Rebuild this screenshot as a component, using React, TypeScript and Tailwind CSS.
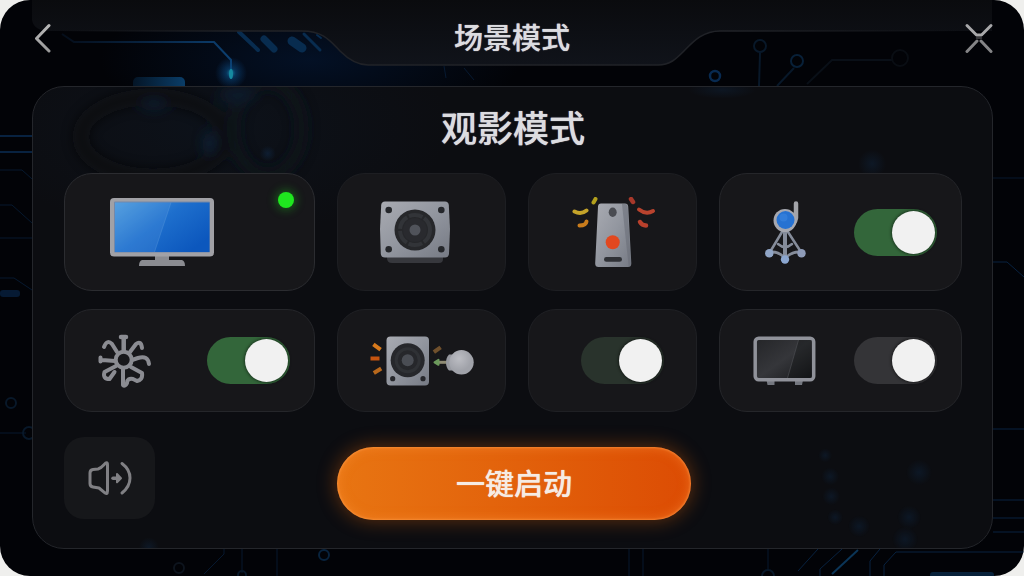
import { useState, type ReactNode } from 'react'
import clsx from 'clsx'

type Tone = 'green' | 'dim' | 'gray'

const TONES: Record<Tone, string> = {
  green: 'bg-[#33663a]',
  dim: 'bg-[#29332c]',
  gray: 'bg-[#343437]',
}

function Toggle({ label, tone }: { label: string; tone: Tone }) {
  const [on, setOn] = useState(true)

  return (
    <input
      type="checkbox"
      role="switch"
      aria-label={label}
      checked={on}
      onChange={(e) => setOn(e.target.checked)}
      className={clsx(
        'h-[47px] w-[83px] shrink-0 cursor-pointer appearance-none rounded-full p-0.5',
        'before:block before:size-[43px] before:rounded-full before:bg-[#f1f1f1] before:shadow-[0_0_3px_1px_rgba(0,0,0,0.45)] before:transition-transform',
        'checked:before:translate-x-[36px]',
        TONES[tone],
      )}
    />
  )
}

const CARD = 'relative flex items-center rounded-[28px] border bg-[#17171a]'
const TITLE = 'text-center leading-10 font-medium text-[#dcdce0] text-shadow-[0_0_1px_#dcdce0]'

function DeviceButton({ label, className, children }: { label: string; className?: string; children: ReactNode }) {
  return (
    <button type="button" aria-label={label} className={clsx(CARD, 'cursor-pointer', className)}>
      {children}
    </button>
  )
}

function Backdrop() {
  return (
    <svg
      className="absolute inset-0 size-full"
      viewBox="0 0 1024 576"
      preserveAspectRatio="xMidYMid slice"
      fill="none"
      aria-hidden="true"
    >
      <defs>
        <radialGradient id="haze">
          <stop offset="0" stopColor="#04152f" stopOpacity="0.75" />
          <stop offset="1" stopColor="#04152f" stopOpacity="0" />
        </radialGradient>
        <radialGradient id="spark">
          <stop offset="0" stopColor="#1683a6" />
          <stop offset="0.3" stopColor="#0a4a80" stopOpacity="0.6" />
          <stop offset="1" stopColor="#0a3a70" stopOpacity="0" />
        </radialGradient>
        <linearGradient id="trace" x1="60" x2="230" y1="0" y2="0" gradientUnits="userSpaceOnUse">
          <stop stopColor="#050d19" />
          <stop offset="0.5" stopColor="#082340" />
          <stop offset="1" stopColor="#0c3f70" />
        </linearGradient>
        <linearGradient id="pill">
          <stop stopColor="#041526" />
          <stop offset="1" stopColor="#0a3d68" />
        </linearGradient>
      </defs>

      <ellipse cx="310" cy="60" rx="210" ry="70" fill="url(#haze)" />
      <path d="M62 34l12 8h140l17 18v14" stroke="url(#trace)" strokeWidth="2" />
      <circle cx="231" cy="73" r="16" fill="url(#spark)" />
      <ellipse cx="231" cy="74" rx="2" ry="5" fill="#168aa0" />
      <rect x="133" y="77" width="52" height="14" rx="5" fill="url(#pill)" />
      <g stroke="#082c4f" strokeLinecap="round">
        <path d="M239 32l19 18" strokeWidth="4" />
        <path d="M264 39l10 10" strokeWidth="7" />
        <path d="M292 41l10 7" strokeWidth="9" />
        <path d="M304 34l16 16" strokeWidth="3" />
        <path d="M317 35l4 3" strokeWidth="2" />
      </g>
      <g stroke="#082240" strokeWidth="1">
        <path d="M444 66l2 12M464 68l10 12" opacity="0.7" />
        <path d="M0 136h32M0 152h32" strokeWidth="2" />
        <path d="M0 170h22l10 9M0 238h32M0 278h14l18 12M0 433h26M0 205h12l20 18" opacity="0.7" />
        <path d="M993 262h14l17 15M993 429h31M993 500h31M993 518h31M993 532h31M896 552h128" />
        <path d="M993 178h31M224 549v5l-20 20M242 549v24M277 549v27M629 549v27M643 549v27M768 549v20" opacity="0.7" />
        <path d="M818 549l-20 22M842 549l-22 20v7M880 549l-10 12v15M896 552l-12 13v11" />
      </g>
      <path d="M858 550l-26 24" stroke="#0b3557" strokeWidth="2" />
      <rect x="0" y="290" width="20" height="7" rx="3" fill="#061a33" />
      <rect x="930" y="572" width="64" height="7" rx="3" fill="#07213a" />
      <circle cx="715" cy="76" r="5" stroke="#082a50" strokeWidth="2.5" />
      <g stroke="#081829" strokeWidth="2">
        <circle cx="760" cy="46" r="6" />
        <path d="M760 53l-1 33" />
        <circle cx="797" cy="61" r="6" stroke="#082038" />
        <path d="M794 68l-17 18" />
        <circle cx="29" cy="433" r="6" />
        <circle cx="11" cy="403" r="5" />
        <circle cx="179" cy="568" r="5" stroke="#0d141d" />
        <circle cx="324" cy="555" r="5" stroke="#08233d" />
        <circle cx="242" cy="575" r="4" />
        <circle cx="768" cy="576" r="6" />
      </g>
      <path d="M807 84l25-24h60" stroke="#090f17" strokeWidth="2" />
      <circle cx="900" cy="58" r="8" stroke="#090d13" strokeWidth="2" />
    </svg>
  )
}

// soft light seen through the glass panel
function PanelGlow() {
  return (
    <svg className="absolute inset-0 size-full rounded-[32px]" viewBox="0 0 960 462" preserveAspectRatio="xMidYMid slice" fill="none" aria-hidden="true">
      <defs>
        <radialGradient id="mist">
          <stop offset="0" stopColor="#102c4c" stopOpacity="0.5" />
          <stop offset="1" stopColor="#102c4c" stopOpacity="0" />
        </radialGradient>
        <filter id="soft" x="-20%" y="-20%" width="140%" height="140%">
          <feGaussianBlur stdDeviation="6" />
        </filter>
      </defs>
      <ellipse cx="180" cy="40" rx="240" ry="110" fill="url(#mist)" opacity="0.3" />
      <g filter="url(#soft)" opacity="0.6">
        <ellipse cx="120" cy="50" rx="72" ry="40" stroke="#0d0d0f" strokeWidth="16" />
        <ellipse cx="235" cy="42" rx="34" ry="46" stroke="#10151f" strokeWidth="14" />
        <ellipse cx="176" cy="56" rx="6" ry="11" fill="#0f2c46" />
        <ellipse cx="121" cy="18" rx="13" ry="6" fill="#0e2138" />
        <ellipse cx="204" cy="8" rx="18" ry="9" fill="#0e2337" />
      </g>
      <circle cx="235" cy="67" r="8" fill="url(#mist)" />
      <ellipse cx="690" cy="3" rx="34" ry="9" fill="url(#mist)" opacity="0.6" />
      <g fill="url(#mist)" opacity="0.7">
        <circle cx="840" cy="77" r="14" />
        <circle cx="793" cy="369" r="7" />
        <circle cx="798" cy="390" r="9" />
        <circle cx="799" cy="410" r="9" />
        <circle cx="803" cy="431" r="8" />
        <circle cx="827" cy="440" r="11" />
        <circle cx="887" cy="386" r="13" />
        <circle cx="877" cy="431" r="12" />
        <circle cx="873" cy="453" r="13" />
        <circle cx="116" cy="461" r="10" />
      </g>
    </svg>
  )
}

function IconDefs() {
  return (
    <svg className="absolute size-0" aria-hidden="true">
      <defs>
        <linearGradient id="metal" x1="0" y1="0" x2="1" y2="1">
          <stop stopColor="#a9abb2" />
          <stop offset="0.5" stopColor="#92969f" />
          <stop offset="1" stopColor="#767a84" />
        </linearGradient>
        <linearGradient id="screen" x1="0" y1="0" x2="1" y2="0.7">
          <stop stopColor="#4d9bdd" />
          <stop offset="0.5" stopColor="#1e6fcd" />
          <stop offset="1" stopColor="#0c57bd" />
        </linearGradient>
        <linearGradient id="glass" x1="0" y1="0" x2="1" y2="1">
          <stop stopColor="#242528" />
          <stop offset="0.5" stopColor="#35363a" />
          <stop offset="1" stopColor="#151619" />
        </linearGradient>
        <linearGradient id="chrome" x1="0" y1="0" x2="0" y2="1">
          <stop stopColor="#b8b8b8" />
          <stop offset="1" stopColor="#9a9a9a" />
        </linearGradient>
        <radialGradient id="bulb" cx="0.4" cy="0.35">
          <stop stopColor="#bcbdc3" />
          <stop offset="1" stopColor="#a0a2a9" />
        </radialGradient>
      </defs>
    </svg>
  )
}

function TvIcon() {
  return (
    <svg width="104" height="68" viewBox="0 0 104 68" aria-hidden="true">
      <path d="M45 57h14v5h13q3 1 3 6H29q0-5 3-6h13z" fill="#8b8c91" />
      <rect width="104" height="58.5" rx="4" fill="#a1a1a6" />
      <rect x="4" y="3.5" width="96" height="51" rx="1" fill="#7488a8" />
      <rect x="5" y="4.5" width="94.5" height="49.5" fill="url(#screen)" />
      <path d="M5 4.5H61L44.5 54H5z" fill="#8cc2ee" opacity="0.14" />
      <path d="M61 4.5L44.5 54" stroke="#7db4e6" strokeWidth="0.6" opacity="0.4" />
    </svg>
  )
}

function SpeakerIcon() {
  return (
    <svg width="70" height="62" viewBox="0 0 70 62" aria-hidden="true">
      <path d="M7 55h56v3q0 4-4 4H12q-5 0-5-5z" fill="#37383d" />
      <path d="M5 .5H65q3.5 0 3.8 3.5L70 28 69 52.5q-.3 4-4 4H5q-4 0-4.200-4L0 28 1.200 4Q1.500.5 5 .5z" fill="url(#metal)" />
      <circle cx="35" cy="29" r="20.5" fill="#26272a" />
      <circle cx="35" cy="29" r="15" fill="none" stroke="#323438" strokeWidth="4" strokeDasharray="14 2" />
      <circle cx="35" cy="29" r="12" fill="#292a2e" />
      <circle cx="35" cy="29" r="5.5" fill="#50535a" />
      <g fill="#25272b">
        <circle cx="8.700" cy="9" r="3.3" />
        <circle cx="61.300" cy="9" r="3.3" />
        <circle cx="8.700" cy="48.300" r="3.3" />
        <circle cx="61.300" cy="48.300" r="3.3" />
      </g>
    </svg>
  )
}

function RemoteIcon() {
  return (
    <svg width="84" height="70" viewBox="0 0 84 70" fill="none" strokeLinecap="round" aria-hidden="true">
      <path d="M29 6.500H53q3 0 3.200 3L59.300 66q.2 4-3.300 4H26.500q-3.500 0-3.300-4L26 9.500q.2-3 3-3z" fill="url(#metal)" />
      <path d="M50 7h3q2.500 0 2.700 3l3 56q0 3-2 3.500z" fill="#656973" opacity="0.5" />
      <ellipse cx="40.700" cy="15.300" rx="4" ry="4.700" fill="#4a4c52" />
      <circle cx="40.700" cy="45.300" r="7" fill="#e2481f" />
      <rect x="32" y="60" width="18" height="4.800" rx="2.400" fill="#2f3136" />
      <path d="M21.500 5.500l2-3.500" stroke="#b3a01c" strokeWidth="4" />
      <path d="M2.500 14.500Q9 18 14.500 13.500" stroke="#c4a32a" strokeWidth="4" />
      <path d="M7.500 28.500q6.500 0 7-4" stroke="#c97c1c" strokeWidth="4" />
      <path d="M59 2l2 3" stroke="#a8382a" strokeWidth="4.500" />
      <path d="M67 12.500Q74 18 81 14" stroke="#b9432e" strokeWidth="4" />
      <path d="M68 25q2 3.500 6 3.500" stroke="#b9402c" strokeWidth="4.500" />
    </svg>
  )
}

function TripodIcon() {
  return (
    <svg width="41" height="63" viewBox="0 0 41 63" fill="none" strokeLinecap="round" aria-hidden="true">
      <path d="M31 2.500V17Q30 23 24 27" stroke="#a3a4a9" strokeWidth="4.500" />
      <g stroke="#858c9a" strokeWidth="2.500">
        <path d="M17 31L5 51M23 31l13 20" />
        <path d="M5 51q8-1 15 6 8-7 16-6" />
        <path d="M13 43q7 6 14 0" />
        <path d="M20 29v28" strokeWidth="4" />
      </g>
      <circle cx="20" cy="19.500" r="11.500" fill="#a6a8b0" />
      <circle cx="20.500" cy="19" r="9" fill="#2672d2" />
      <circle cx="18.500" cy="16.500" r="4" fill="#3b86df" opacity="0.6" />
      <circle cx="4.300" cy="52.300" r="4.200" fill="#90a5c6" />
      <circle cx="36.500" cy="52.300" r="4.200" fill="#8e9bb8" />
      <circle cx="20" cy="58.500" r="4.200" fill="#8ba6d0" />
    </svg>
  )
}

function FanIcon() {
  return (
    <svg width="54" height="54" viewBox="0 0 54 54" fill="none" stroke="#8b8c92" strokeWidth="4" strokeLinecap="round" strokeLinejoin="round" aria-hidden="true">
      <circle cx="25.700" cy="25.700" r="8" />
      <path d="M25.700 17V3M23 3h5" strokeWidth="4.500" />
      <path d="M19 18l-5-8Q9 5 6 13" />
      <path d="M32 18l6-8q5-4 6 4" />
      <path d="M17 27l-13-1M2.500 23.500v4" />
      <path d="M34 26l6-2q10-3 11 6" />
      <path d="M18 32L6.500 38q-2 7 5 7l5-7" />
      <path d="M33 33l11 6q1 7-5 8l-4-2q-6-1-6 4-2 4-4 2V34" />
    </svg>
  )
}

function SpeakerLampIcon() {
  return (
    <svg width="104" height="50" viewBox="0 0 104 50" fill="none" aria-hidden="true">
      <rect x="16.500" y=".5" width="42.500" height="49" rx="4" fill="url(#metal)" />
      <circle cx="37.700" cy="24.300" r="17" fill="#26272b" />
      <circle cx="37.700" cy="24.300" r="11.500" stroke="#2f3135" strokeWidth="3" />
      <circle cx="37.700" cy="24.300" r="6" fill="#4a4d54" />
      <circle cx="22.700" cy="42.700" r="2.600" fill="#26272b" />
      <circle cx="53" cy="42.700" r="2.600" fill="#26272b" />
      <path d="M5 9.500l4 3" stroke="#d87a1c" strokeWidth="4" strokeLinecap="square" />
      <path d="M2.500 22.500h5" stroke="#c6540f" strokeWidth="4" strokeLinecap="square" />
      <path d="M5.500 36l4-2.500" stroke="#b8681c" strokeWidth="4" strokeLinecap="square" />
      <path d="M65.500 15l3.500-2.500" stroke="#70502c" strokeWidth="4" strokeLinecap="square" />
      <path d="M68 26.300h9" stroke="#8f8b74" strokeWidth="3" />
      <path d="M64.500 26.300l4-2.500v5z" fill="#6c9a5c" stroke="#6c9a5c" strokeWidth="2" strokeLinejoin="round" />
      <path d="M79 18.500h7v16h-7q-3-3-3-8t3-8z" fill="#96989f" />
      <circle cx="91.500" cy="26.300" r="12.200" fill="url(#bulb)" />
    </svg>
  )
}

function ScreenIcon() {
  return (
    <svg width="63" height="49" viewBox="0 0 63 49" fill="none" aria-hidden="true">
      <path d="M13.500 44h8v5h-7zM42 44h8l-1 5h-7z" fill="#74777f" />
      <rect x="2.200" y="2.200" width="58.500" height="41.500" rx="3.500" fill="url(#glass)" stroke="#90929a" strokeWidth="3.500" />
      <path d="M45.500 4H58.500V42H34.500z" fill="#0c0d0f" opacity="0.35" />
      <path d="M45.500 4L34.500 42" stroke="#4b4c50" strokeWidth="0.700" />
    </svg>
  )
}

function SoundIcon() {
  return (
    <svg width="44" height="35" viewBox="0 0 44 35" fill="none" stroke="#808084" strokeWidth="3" strokeLinecap="round" strokeLinejoin="round" aria-hidden="true">
      <path d="M5 8.500l5-.5q3-.8 6-4.200 3.500-4 3.500.2v26q0 4.500-3.500 1.200L11 27l-6-1q-3-.5-3-3.500V12q0-3 3-3.500z" />
      <path d="M34 2.500q8 6 8 14.500t-8 15" />
      <path d="M25 17.200h5" strokeWidth="3.500" />
      <path d="M29 13l4 4.200-4 4z" fill="#808084" strokeWidth="2" />
    </svg>
  )
}

function TopBar() {
  return (
    <header className="relative flex h-[66px] items-center justify-between px-[30px] pt-2.5">
      <svg className="absolute inset-0 size-full" viewBox="0 0 1024 66" preserveAspectRatio="none" aria-hidden="true">
        <defs>
          <linearGradient id="bar" x1="0" x2="0" y1="0" y2="1">
            <stop stopColor="#0a0b0e" />
            <stop offset="1" stopColor="#10131a" />
          </linearGradient>
          <linearGradient id="rim" x1="60" x2="960" y1="0" y2="0" gradientUnits="userSpaceOnUse">
            <stop stopColor="#202227" stopOpacity="0" />
            <stop offset="0.2" stopColor="#202227" />
            <stop offset="0.75" stopColor="#202227" />
            <stop offset="1" stopColor="#202227" stopOpacity="0" />
          </linearGradient>
        </defs>
        <path d="M32 0V20Q34 31 50 31H302C324 31 331 42 340 51S358 65 368 65H658C670 65 676 59 684 51S702 31 720 31H992V0z" fill="url(#bar)" />
        <path d="M60 31H302C324 31 331 42 340 51S358 65 368 65H658C670 65 676 59 684 51S702 31 720 31H960" fill="none" stroke="url(#rim)" strokeWidth="1.500" />
      </svg>
      <button type="button" aria-label="返回" className="relative cursor-pointer p-1">
        <svg width="17" height="30" viewBox="0 0 17 30" fill="none" stroke="url(#chrome)" strokeWidth="3" strokeLinecap="round" strokeLinejoin="round">
          <path d="M15 2.500L2.500 15.500l12.500 12.500" />
        </svg>
      </button>
      <h1 className={clsx(TITLE, 'pointer-events-none absolute inset-x-0 pb-1 text-[29px]')}>场景模式</h1>
      <button type="button" aria-label="关闭" className="relative cursor-pointer">
        <svg width="30" height="30" viewBox="0 0 30 30" fill="none" strokeWidth="3" strokeLinecap="round" strokeLinejoin="round">
          <path d="M3 2.500L12.500 12h5L27 2.500" stroke="#a8a8aa" />
          <path d="M3 28.500L13 18M27 28.500L17 18" stroke="#848486" />
          <path d="M12.500 15h5" stroke="#4a4a4c" strokeWidth="1.500" />
        </svg>
      </button>
    </header>
  )
}

export default function App() {
  return (
    <div className="min-h-screen bg-[#efefed]">
      <div className="relative flex min-h-screen flex-col overflow-hidden rounded-[30px] bg-[#020307] font-['Noto_Sans_CJK_SC',sans-serif] text-white">
        <IconDefs />
        <Backdrop />
        <TopBar />

        <main className="relative mt-5 mr-[31px] mb-[27px] ml-8 flex-1 rounded-[32px] border border-[#24262b] bg-[#0c0d11] pt-[19px] pr-[30px] pb-7 pl-[31px]">
          <PanelGlow />
          <h2 className={clsx(TITLE, 'relative mb-[27px] text-[36px]')}>观影模式</h2>

          <div className="relative grid grid-cols-[251fr_170fr_169fr_243fr] grid-rows-[118px_103px] gap-x-[22px] gap-y-[18px]">
            <DeviceButton label="电视" className="border-[#2b2c30] pl-[45px]">
              <TvIcon />
              <span className="absolute top-[18px] right-5 size-4 rounded-full bg-[#1fe61f] shadow-[0_0_10px_2px_rgba(31,230,31,0.35)]" />
            </DeviceButton>
            <DeviceButton label="音箱" className="border-[#1d1e22] pl-[42px]">
              <SpeakerIcon />
            </DeviceButton>
            <DeviceButton label="遥控器" className="justify-center border-[#1d1e22] pl-0.5">
              <RemoteIcon />
            </DeviceButton>
            <div className={clsx(CARD, 'justify-between border-[#25262a] pr-6 pl-[45px]')}>
              <TripodIcon />
              <Toggle label="摄像头" tone="green" />
            </div>

            <div className={clsx(CARD, 'justify-between border-[#25262a] pr-6 pl-[33px]')}>
              <FanIcon />
              <Toggle label="风扇" tone="green" />
            </div>
            <DeviceButton label="音箱与灯" className="justify-center border-[#1f2024]">
              <SpeakerLampIcon />
            </DeviceButton>
            <div className={clsx(CARD, 'justify-end border-[#1f2024] pr-8')}>
              <Toggle label="灯光" tone="dim" />
            </div>
            <div className={clsx(CARD, 'justify-between border-[#25262a] pr-6 pl-[33px]')}>
              <ScreenIcon />
              <Toggle label="显示器" tone="gray" />
            </div>
          </div>

          <div className="relative mt-[25px] grid grid-cols-[251fr_170fr_169fr_243fr] items-start gap-x-[22px]">
            <button
              type="button"
              aria-label="声音输出"
              className="flex h-[82px] w-[91px] cursor-pointer items-center justify-center rounded-[20px] bg-[#16171a]"
            >
              <SoundIcon />
            </button>
            <button
              type="button"
              className="col-span-2 mt-2.5 mr-1.5 h-[73px] cursor-pointer rounded-full bg-linear-to-r from-[#e87512] to-[#dc4c04] pb-1 text-[29px] leading-10 font-medium text-[#f6ece4] shadow-[0_0_18px_2px_rgba(225,100,10,0.35),inset_0_0_12px_rgba(255,150,60,0.5),inset_0_0_2px_1px_rgba(255,160,80,0.5)] text-shadow-[0_0_1px_#f6ece4]"
            >
              一键启动
            </button>
          </div>
        </main>
      </div>
    </div>
  )
}
